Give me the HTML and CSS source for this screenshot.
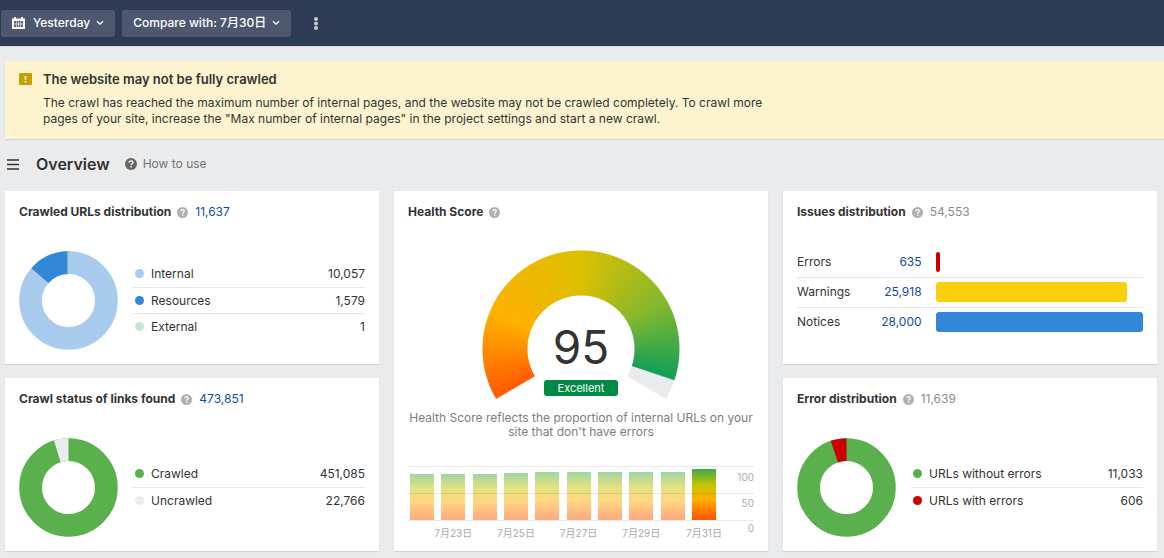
FILE: index.html
```html
<!DOCTYPE html>
<html lang="en">
<head>
  <meta charset="UTF-8" />
  <meta name="viewport" content="width=device-width, initial-scale=1.0"/>
  <title>Site Audit | Overview</title>
  <link rel="stylesheet" href="styles.css">
</head>
<body>
  <svg class="sprite" aria-hidden="true">
    <symbol id="help" viewBox="0 0 22 22">
      <circle cx="11" cy="11" r="11" fill="currentColor"/>
      <path d="M7.6 8.6c0-2 1.400-3.300 3.500-3.300s3.500 1.200 3.500 2.900c0 2.300-3.200 2.300-3.200 4.800" fill="none" stroke="#fff" stroke-width="2.400"/>
      <rect x="10" y="14.600" width="2.800" height="2.800" fill="#fff"/>
    </symbol>
    <symbol id="chevron" viewBox="0 0 8 6">
      <path d="M1 1.200l3 3 3-3" fill="none" stroke="currentColor" stroke-width="1.300"/>
    </symbol>
  </svg>

  <header class="topbar">
    <button class="top-btn" type="button">
      <svg class="calendar" viewBox="0 0 13 13" aria-hidden="true">
        <path d="M0 1.500h2V0h2v1.500h5V0h2v1.500h2V12H0z" fill="#fff"/>
        <path d="M2 4h9v6H2z" fill="#4d5870"/>
        <path d="M2 7h9M4.300 4v6M6.500 4v6M8.700 4v6" stroke="#fff" stroke-width="0.700"/>
      </svg>
      Yesterday
      <svg class="chevron" aria-hidden="true"><use href="#chevron"/></svg>
    </button>
    <button class="top-btn" type="button">
      Compare with: 7月30日
      <svg class="chevron" aria-hidden="true"><use href="#chevron"/></svg>
    </button>
    <button class="more-btn" type="button" aria-label="More">
      <svg viewBox="0 0 4 13" aria-hidden="true">
        <circle cx="2" cy="2" r="2"/><circle cx="2" cy="6.500" r="2"/><circle cx="2" cy="11" r="2"/>
      </svg>
    </button>
  </header>

  <section class="notice">
    <svg class="notice-icon" viewBox="0 0 13 12" aria-hidden="true">
      <rect width="13" height="12" rx="1" fill="#c4a000"/>
      <path d="M5.700 3h1.600v3.800H5.700zM5.700 8h1.600v1.600H5.700z" fill="#fff"/>
    </svg>
    <div>
      <h2>The website may not be fully crawled</h2>
      <p>The crawl has reached the maximum number of internal pages, and the website may not be crawled completely. To crawl more pages of your site, increase the "Max number of internal pages" in the project settings and start a new crawl.</p>
    </div>
  </section>

  <div class="page-title">
    <button class="menu-btn" type="button" aria-label="Menu">
      <svg viewBox="0 0 12 11" aria-hidden="true"><path d="M0 1h12M0 5.500h12M0 10h12" stroke="#333" stroke-width="1.600"/></svg>
    </button>
    <h1>Overview</h1>
    <a class="how-to" href="#"><svg aria-hidden="true"><use href="#help"/></svg>How to use</a>
  </div>

  <main class="cards">
    <section class="card">
      <div class="card-head">
        <h3>Crawled URLs distribution</h3>
        <svg class="help" aria-hidden="true"><use href="#help"/></svg>
        <a href="#">11,637</a>
      </div>
      <div class="distribution">
        <svg class="donut" viewBox="0 0 196 196" aria-hidden="true">
          <circle cx="98" cy="98" r="75" pathLength="1000" stroke="#a8cbee"/>
          <circle cx="98" cy="98" r="75" pathLength="1000" stroke="#3287d8" stroke-dasharray="136 864" stroke-dashoffset="-864"/>
          <path class="sliver" d="M97 1v44" stroke="#c1e8d2"/>
        </svg>
        <table class="legend">
          <tr><th scope="row"><i class="dot light-blue"></i>Internal</th><td>10,057</td></tr>
          <tr><th scope="row"><i class="dot blue"></i>Resources</th><td>1,579</td></tr>
          <tr><th scope="row"><i class="dot mint"></i>External</th><td>1</td></tr>
        </table>
      </div>
    </section>

    <section class="card health">
      <div class="card-head">
        <h3>Health Score</h3>
        <svg class="help" aria-hidden="true"><use href="#help"/></svg>
      </div>
      <div class="gauge">
        <div class="score">95</div>
        <div class="grade">Excellent</div>
      </div>
      <p class="health-text">Health Score reflects the proportion of internal URLs on your site that don't have errors</p>
      <div class="chart">
        <div class="plot">
          <div class="bar" style="height: 85%"></div>
          <div class="bar" style="height: 85%"></div>
          <div class="bar" style="height: 85%"></div>
          <div class="bar" style="height: 87%"></div>
          <div class="bar" style="height: 89%"></div>
          <div class="bar" style="height: 89%"></div>
          <div class="bar" style="height: 89%"></div>
          <div class="bar" style="height: 89%"></div>
          <div class="bar" style="height: 89%"></div>
          <div class="bar current" style="height: 95%"></div>
        </div>
        <div class="y-axis"><span>100</span><span>50</span><span>0</span></div>
        <div class="x-axis">
          <span></span><span>7月23日</span>
          <span></span><span>7月25日</span>
          <span></span><span>7月27日</span>
          <span></span><span>7月29日</span>
          <span></span><span>7月31日</span>
        </div>
      </div>
    </section>

    <section class="card">
      <div class="card-head">
        <h3>Issues distribution</h3>
        <svg class="help" aria-hidden="true"><use href="#help"/></svg>
        <span class="total">54,553</span>
      </div>
      <table class="issues">
        <tr><th scope="row">Errors</th><td><a href="#">635</a></td><td class="track"><div class="issue-bar red" style="width: 2.3%"></div></td></tr>
        <tr><th scope="row">Warnings</th><td><a href="#">25,918</a></td><td class="track"><div class="issue-bar yellow" style="width: 92.5%"></div></td></tr>
        <tr><th scope="row">Notices</th><td><a href="#">28,000</a></td><td class="track"><div class="issue-bar blue" style="width: 100%"></div></td></tr>
      </table>
    </section>

    <section class="card">
      <div class="card-head">
        <h3>Crawl status of links found</h3>
        <svg class="help" aria-hidden="true"><use href="#help"/></svg>
        <a href="#">473,851</a>
      </div>
      <div class="distribution">
        <svg class="donut" viewBox="0 0 196 196" aria-hidden="true">
          <circle cx="98" cy="98" r="75" pathLength="1000" stroke="#5bb04e"/>
          <circle cx="98" cy="98" r="75" pathLength="1000" stroke="#eaebed" stroke-dasharray="48 952" stroke-dashoffset="-952"/>
        </svg>
        <table class="legend">
          <tr><th scope="row"><i class="dot green"></i>Crawled</th><td>451,085</td></tr>
          <tr><th scope="row"><i class="dot gray"></i>Uncrawled</th><td>22,766</td></tr>
        </table>
      </div>
    </section>

    <section class="card">
      <div class="card-head">
        <h3>Error distribution</h3>
        <svg class="help" aria-hidden="true"><use href="#help"/></svg>
        <span class="total">11,639</span>
      </div>
      <div class="distribution">
        <svg class="donut" viewBox="0 0 196 196" aria-hidden="true">
          <circle cx="98" cy="98" r="75" pathLength="1000" stroke="#5bb04e"/>
          <circle cx="98" cy="98" r="75" pathLength="1000" stroke="#cc0000" stroke-dasharray="52 948" stroke-dashoffset="-948"/>
        </svg>
        <table class="legend">
          <tr><th scope="row"><i class="dot green"></i>URLs without errors</th><td>11,033</td></tr>
          <tr><th scope="row"><i class="dot red"></i>URLs with errors</th><td>606</td></tr>
        </table>
      </div>
    </section>
  </main>
</body>
</html>
```
FILE: styles.css
```css
* {
  box-sizing: border-box;
}
body {
  font-family: Inter, 'Noto Sans CJK SC', sans-serif;
  font-size: 12px;
  line-height: 16px;
  color: #333;
  background: #eaebed;
  margin: 0;
}
h1, h2, h3, p {
  margin: 0;
}
h2, h3 {
  font-size: 13px;
  font-weight: 600;
}
h3 {
  font-size: 12px;
  font-weight: 700;
}
a {
  color: #0f4c9c;
  text-decoration: none;
}
button {
  font: inherit;
  border: none;
  padding: 0;
  background: none;
  cursor: pointer;
}
.sprite {
  display: none;
}

/* top bar */
.topbar {
  display: flex;
  align-items: center;
  gap: 7px;
  height: 46px;
  padding: 0 1px;
  background: #2e3b55;
  box-shadow: 0 1px 0 #d6d8dc;
}
.top-btn {
  display: flex;
  align-items: center;
  height: 27px;
  padding: 0 11px;
  border-radius: 3px;
  background: #4d5870;
  color: #fff;
  font-weight: 500;
  white-space: nowrap;
}
.top-btn:hover {
  background: #5b667d;
}
.calendar {
  width: 13px;
  height: 13px;
  margin-right: 8px;
}
.chevron {
  width: 8px;
  height: 6px;
  margin-left: 6px;
}
.more-btn {
  display: flex;
  justify-content: center;
  width: 36px;
  fill: #c5cad3;
}
.more-btn svg {
  width: 4px;
  height: 13px;
}

/* notice */
.notice {
  display: flex;
  gap: 11px;
  margin: 15px 0 0 5px;
  padding: 10px 14px 12px;
  background: #fdf4cf;
  box-shadow: 0 1px 1px rgba(0,0,0,0.1);
}
.notice-icon {
  flex: none;
  width: 13px;
  height: 12px;
  margin-top: 2px;
}
.notice p {
  max-width: 745px;
  margin-top: 8px;
}

/* page title */
.page-title {
  display: flex;
  align-items: center;
  height: 52px;
  padding: 0 0 2px 7px;
}
.menu-btn {
  display: flex;
}
.menu-btn svg {
  width: 12px;
  height: 11px;
}
h1 {
  margin: 0 15px 0 17px;
  font-size: 16px;
  line-height: 20px;
  font-weight: 600;
}
.how-to {
  display: flex;
  align-items: center;
  gap: 6px;
  color: #737373;
}
.how-to svg {
  width: 12px;
  height: 12px;
  color: #666;
}

/* cards */
.cards {
  display: grid;
  grid-template-columns: repeat(3, minmax(0, 1fr));
  gap: 14px 15px;
  padding: 0 7px 7px 5px;
}
.card {
  min-height: 173px;
  padding: 13px 14px 12px;
  background: #fff;
  box-shadow: 0 1px 1px rgba(0,0,0,0.1);
}
.card-head {
  display: flex;
  align-items: center;
  height: 16px;
}
.help {
  width: 11px;
  height: 11px;
  margin: 0 7px 0 6px;
  color: #b0b0b0;
}
.total {
  color: #8c8c8c;
}

/* donuts */
.distribution {
  display: flex;
  align-items: center;
  gap: 15px;
  margin-top: 31px;
}
.donut {
  flex: none;
  width: 99px;
  height: 99px;
}
.donut circle {
  fill: none;
  stroke-width: 45;
  transform: rotate(-90deg);
  transform-origin: center;
}
.sliver {
  stroke-width: 2;
}
table {
  width: 100%;
  border-collapse: collapse;
}
th {
  font-weight: 400;
  text-align: left;
}
td {
  text-align: right;
}
tr + tr {
  border-top: 1px solid #e6e7e9;
}
.legend th, .legend td {
  height: 26px;
  padding: 0;
}
.dot {
  display: inline-block;
  width: 9px;
  height: 9px;
  margin: 0 7px 0 2px;
  border-radius: 50%;
}
.light-blue {
  background: #a8cbee;
}
.blue {
  background: #3287d8;
}
.mint {
  background: #c1e8d2;
}
.green {
  background: #5bb04e;
}
.gray {
  background: #eaebed;
}
.red {
  background: #cc0000;
}
.yellow {
  background: #fbce0e;
}

/* issues */
.issues {
  table-layout: fixed;
  margin-top: 27px;
}
.issues th, .issues td {
  height: 30px;
  padding: 0;
}
.issues td.track {
  width: 64%;
  padding-left: 14px;
}
.issue-bar {
  height: 20px;
  border-radius: 3px;
}

/* health score */
.health {
  grid-row: span 2;
}
.gauge {
  position: relative;
  display: flex;
  flex-direction: column;
  align-items: center;
  justify-content: flex-end;
  gap: 9px;
  width: 198px;
  height: 149px;
  margin: 30px auto 0;
  padding-bottom: 3px;
}
.gauge::before {
  content: "";
  position: absolute;
  inset: 0;
  background: conic-gradient(from 240deg at 50% 99px, #ff5a00 0deg, #ff8a00 28deg, #ffb000 52deg, #dcc000 120deg, #85b82d 180deg, #12a057 228deg, #eaebed 229deg 240deg, transparent 241deg 359deg, #ff5a00 360deg);
  -webkit-mask: radial-gradient(circle at 50% 99px, transparent 53px, #000 54px 98px, transparent 99px);
  mask: radial-gradient(circle at 50% 99px, transparent 53px, #000 54px 98px, transparent 99px);
}
.score {
  font-size: 46px;
  line-height: 48px;
}
.grade {
  width: 74px;
  border-radius: 3px;
  background: #008a45;
  color: #fff;
  font-size: 11px;
  line-height: 16px;
  text-align: center;
}
.health-text {
  max-width: 346px;
  margin: 12px auto 0;
  color: #7d7d7d;
  line-height: 14px;
  text-align: center;
}
.chart {
  position: relative;
  display: grid;
  grid-template-columns: 1fr 38px;
  margin-top: 27px;
  color: #aaa;
  font-size: 10px;
  line-height: 12px;
}
/* 100 / 50 / 0 lines, drawn over the bars */
.chart::after {
  content: "";
  position: absolute;
  inset: 0 0 auto;
  height: 55px;
  background: repeating-linear-gradient(rgba(0,0,0,0.09) 0 1px, transparent 1px 27px);
}
.plot {
  display: flex;
  align-items: flex-end;
  justify-content: space-between;
  height: 54px;
  padding-left: 2px;
}
.bar {
  width: 24px;
  background: linear-gradient(#3fa94b, #c8c400 32%, #ffb000 60%, #ff5a00 95%);
  opacity: 0.5;
}
.bar.current {
  opacity: 1;
}
.y-axis {
  grid-row: span 2;
  display: flex;
  flex-direction: column;
  justify-content: space-between;
  height: 68px;
  padding-top: 5px;
  text-align: right;
}
.x-axis {
  display: flex;
  justify-content: space-between;
  margin-top: 7px;
  padding-left: 2px;
}
.x-axis span {
  display: flex;
  justify-content: center;
  width: 24px;
  white-space: nowrap;
}
```
